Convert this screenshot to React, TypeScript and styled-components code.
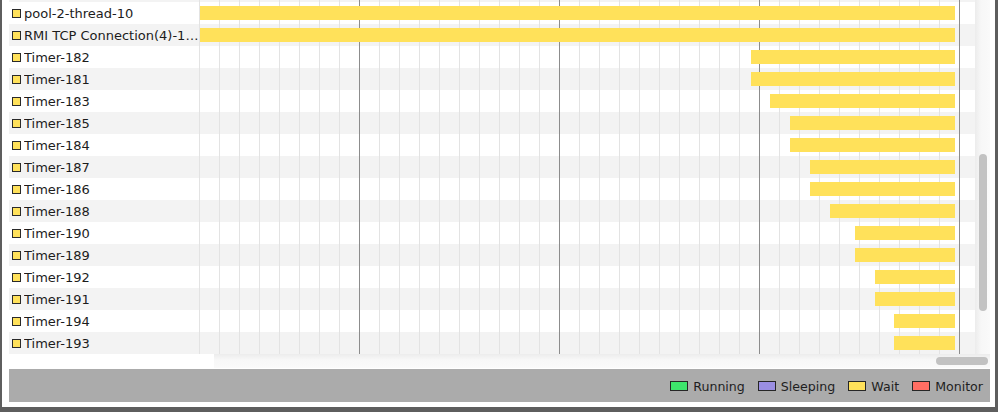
import React from "react";
import styled, { createGlobalStyle } from "styled-components";

const Global = createGlobalStyle`
  html, body { margin: 0; padding: 0; background: #ffffff; }
  body { font-family: "DejaVu Sans", "Liberation Sans", sans-serif; }
  * { box-sizing: border-box; }
`;

type ThreadRow = { name: string; start: number };

const CHART_LEFT = 199;
const BAR_END = 955;

const rows: ThreadRow[] = [
  { name: "Timer-180", start: 751 },
  { name: "pool-2-thread-10", start: 200 },
  { name: "RMI TCP Connection(4)-127.0.0.1", start: 200 },
  { name: "Timer-182", start: 751 },
  { name: "Timer-181", start: 751 },
  { name: "Timer-183", start: 770 },
  { name: "Timer-185", start: 790 },
  { name: "Timer-184", start: 790 },
  { name: "Timer-187", start: 810 },
  { name: "Timer-186", start: 810 },
  { name: "Timer-188", start: 830 },
  { name: "Timer-190", start: 855 },
  { name: "Timer-189", start: 855 },
  { name: "Timer-192", start: 875 },
  { name: "Timer-191", start: 875 },
  { name: "Timer-194", start: 894 },
  { name: "Timer-193", start: 894 },
];

const legend = [
  { label: "Running", color: "#3ee46c" },
  { label: "Sleeping", color: "#9a8ee2" },
  { label: "Wait", color: "#ffe15a" },
  { label: "Monitor", color: "#ff6e63" },
];

const Frame = styled.div`
  width: 998px;
  height: 412px;
  background: #ffffff;
  border-left: 2px solid #5e5e5e;
  border-right: 3px solid #5e5e5e;
  border-bottom: 5px solid #5e5e5e;
  padding: 0 5px 5px 7px;
  display: flex;
  flex-direction: column;
  overflow: hidden;
`;

const TopArea = styled.div`
  display: flex;
  height: 354px;
`;

const RowsViewport = styled.div`
  width: 966px;
  height: 354px;
  overflow: hidden;
`;

const RowsInner = styled.div`
  margin-top: -20px;
  display: flex;
  flex-direction: column;
`;

const Row = styled.div<{ $alt: boolean }>`
  display: flex;
  height: 22px;
  background: ${(p) => (p.$alt ? "#f3f3f3" : "#ffffff")};
`;

const LabelCell = styled.div`
  width: 190px;
  flex: none;
  display: flex;
  align-items: center;
  gap: 3px;
  padding-left: 3px;
  padding-top: 1px;
  font-size: 13px;
  color: #1c1c1c;
`;

const StateSquare = styled.span`
  width: 9px;
  height: 9px;
  flex: none;
  margin-top: -1px;
  border: 1px solid #2a2a2a;
  background: #ffe15a;
`;

const LabelText = styled.span`
  white-space: nowrap;
  overflow: hidden;
  text-overflow: ellipsis;
  min-width: 0;
`;

const ChartCell = styled.div`
  flex: 1;
  display: flex;
  align-items: flex-start;
  padding-top: 4px;
  background-image:
    repeating-linear-gradient(
      to right,
      transparent 0 160px,
      #8c8c8c 160px 161px,
      transparent 161px 200px
    ),
    repeating-linear-gradient(to right, #e3e3e3 0 1px, transparent 1px 20px);
`;

const Bar = styled.div`
  height: 14px;
  background: #ffe15a;
`;

const VScroll = styled.div`
  width: 15px;
  height: 354px;
  background: linear-gradient(to right, #ececec, #f7f7f7 40%, #fafafa);
  padding-left: 4px;
  padding-top: 154px;
`;

const VThumb = styled.div`
  width: 8px;
  height: 157px;
  border-radius: 4px;
  background: #c2c2c2;
`;

const BottomStrip = styled.div`
  display: flex;
  height: 14px;
`;

const BlankCorner = styled.div`
  width: 205px;
  background: #ffffff;
`;

const HScroll = styled.div`
  flex: 1;
  display: flex;
  justify-content: flex-end;
  align-items: center;
  padding-right: 2px;
  background: linear-gradient(to bottom, #ececec, #f7f7f7 40%, #fafafa);
`;

const HThumb = styled.div`
  width: 52px;
  height: 8px;
  border-radius: 4px;
  background: #c2c2c2;
`;

const LegendPanel = styled.div`
  margin-top: 1px;
  height: 33px;
  background: #ababab;
  display: flex;
  justify-content: flex-end;
  align-items: center;
  gap: 13px;
  padding-right: 7px;
  padding-top: 1px;
`;

const LegendItem = styled.div`
  display: flex;
  align-items: center;
  gap: 5px;
  font-size: 12.6px;
  color: #1e1e1e;
`;

const Swatch = styled.span<{ $color: string }>`
  width: 18px;
  height: 10px;
  border: 1px solid #262626;
  background: ${(p) => p.$color};
`;

export default function App() {
  return (
    <>
      <Global />
      <Frame>
        <TopArea>
          <RowsViewport>
            <RowsInner>
              {rows.map((r, i) => (
                <Row key={r.name} $alt={i % 2 === 0}>
                  <LabelCell>
                    <StateSquare />
                    <LabelText>{r.name}</LabelText>
                  </LabelCell>
                  <ChartCell>
                    <Bar
                      style={{
                        marginLeft: r.start - CHART_LEFT,
                        width: BAR_END - r.start,
                      }}
                    />
                  </ChartCell>
                </Row>
              ))}
            </RowsInner>
          </RowsViewport>
          <VScroll>
            <VThumb />
          </VScroll>
        </TopArea>
        <BottomStrip>
          <BlankCorner />
          <HScroll>
            <HThumb />
          </HScroll>
        </BottomStrip>
        <LegendPanel>
          {legend.map((l) => (
            <LegendItem key={l.label}>
              <Swatch $color={l.color} />
              {l.label}
            </LegendItem>
          ))}
        </LegendPanel>
      </Frame>
    </>
  );
}
